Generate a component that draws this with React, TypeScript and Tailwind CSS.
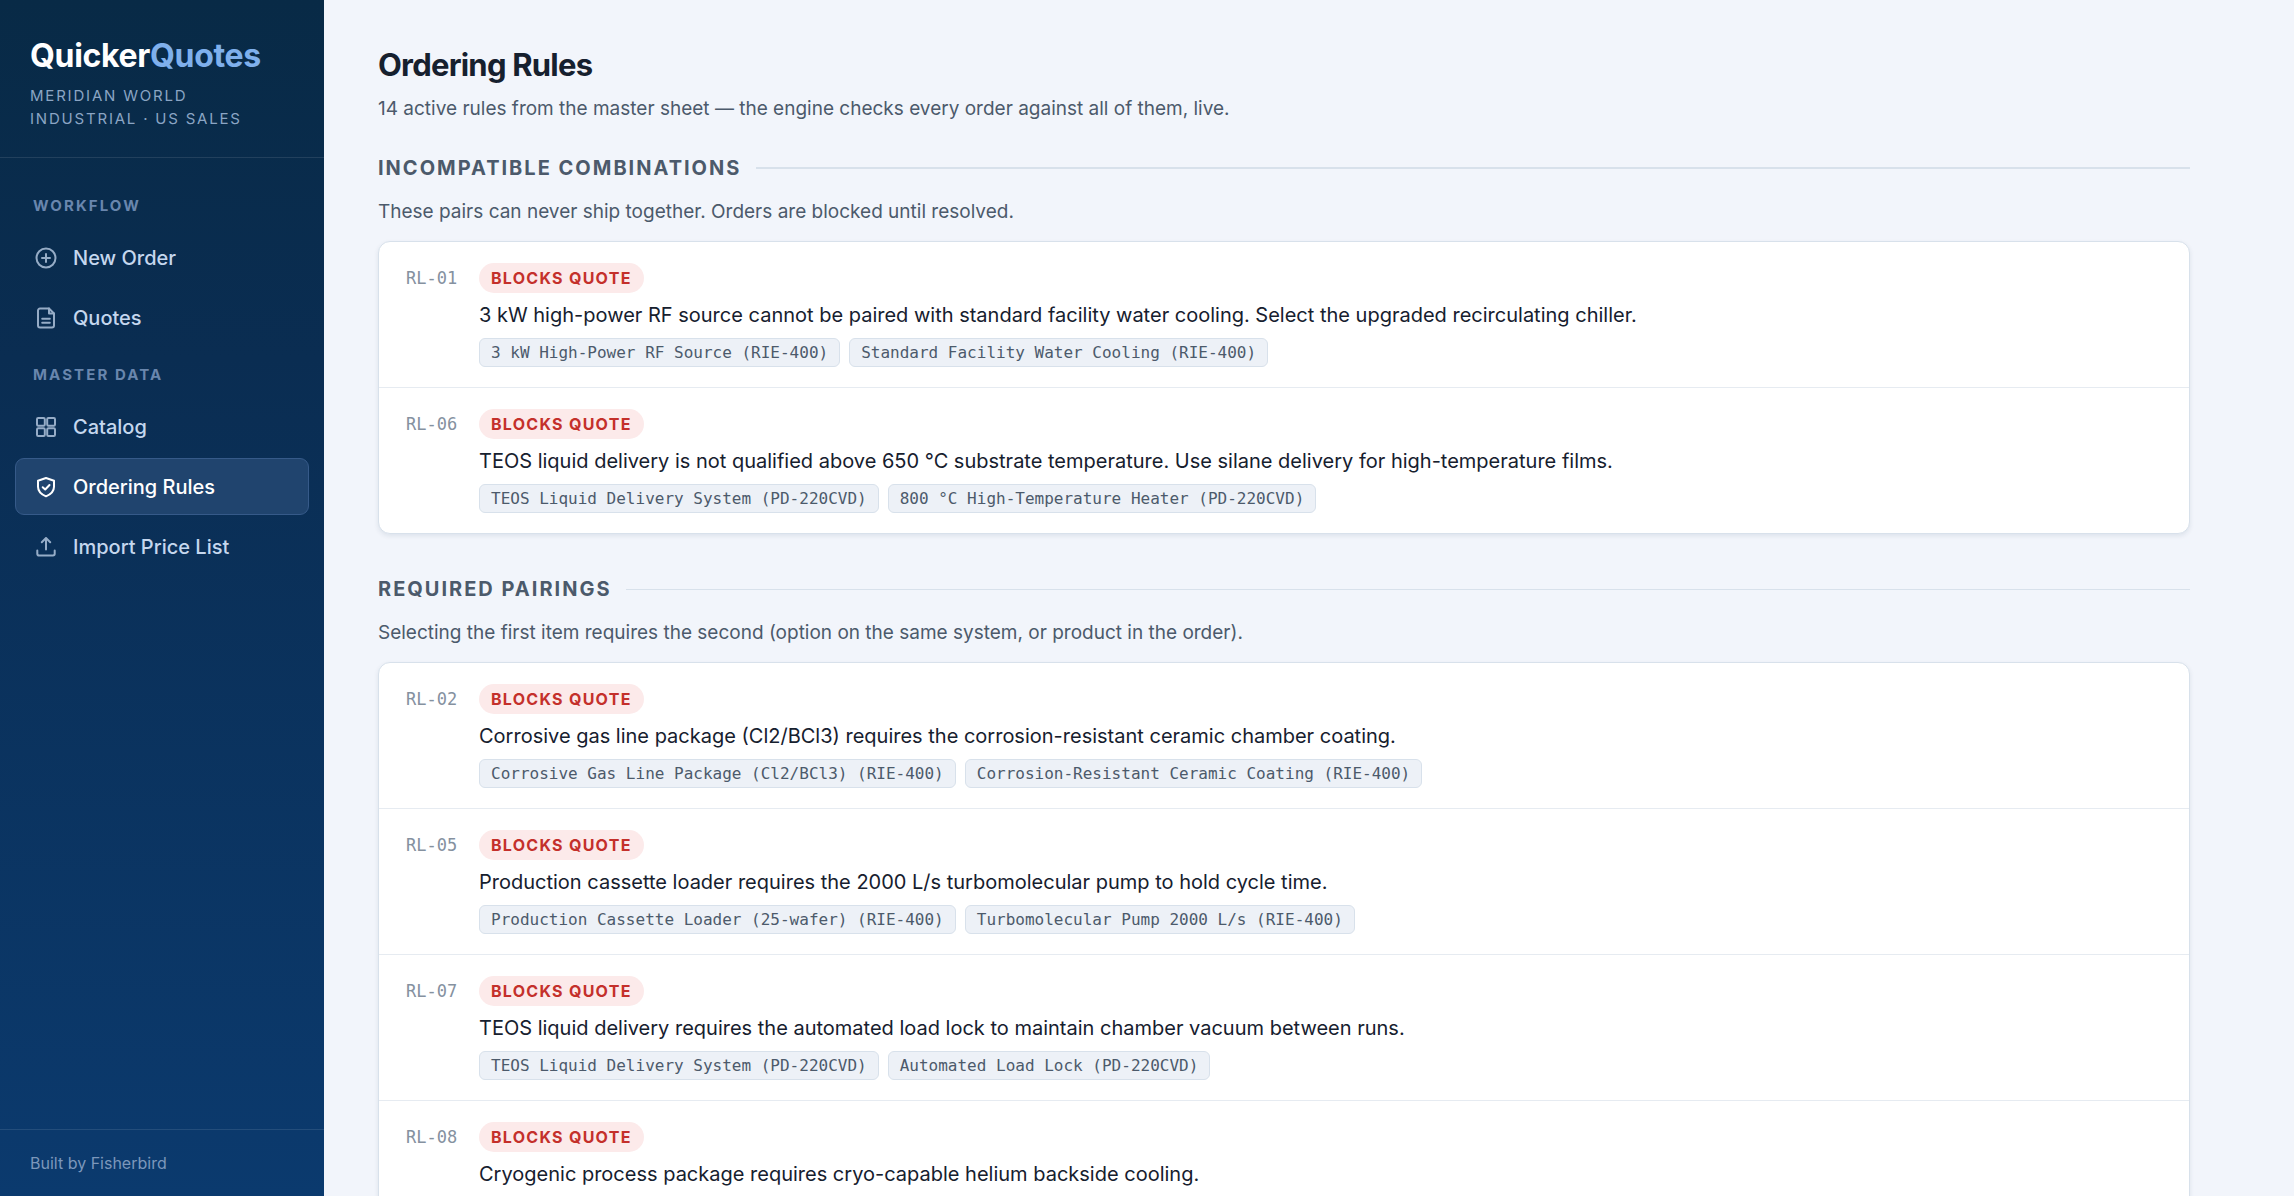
import React from 'react';

interface Rule {
  id: string;
  text: string;
  items: string[];
}

interface RuleGroup {
  title: string;
  description: string;
  rules: Rule[];
}

interface NavItem {
  label: string;
  icon: React.ReactNode;
  active?: boolean;
}

const navGroups: { title: string; items: NavItem[] }[] = [
  {
    title: 'Workflow',
    items: [
      {
        label: 'New Order',
        icon: (
          <>
            <circle cx="12" cy="12" r="9.5" />
            <path d="M12 8v8M8 12h8" />
          </>
        ),
      },
      {
        label: 'Quotes',
        icon: (
          <>
            <path d="M15 2.500H6a2 2 0 0 0-2 2v15a2 2 0 0 0 2 2h12a2 2 0 0 0 2-2V7.500z" />
            <path d="M15 2.500v5h5M8.200 12.800h7.600M8.200 16.800h7.600" />
          </>
        ),
      },
    ],
  },
  {
    title: 'Master Data',
    items: [
      {
        label: 'Catalog',
        icon: (
          <>
            <rect x="3" y="3" width="7.8" height="7.8" rx="1.2" />
            <rect x="13.2" y="3" width="7.8" height="7.8" rx="1.2" />
            <rect x="3" y="13.2" width="7.8" height="7.8" rx="1.2" />
            <rect x="13.2" y="13.2" width="7.8" height="7.8" rx="1.2" />
          </>
        ),
      },
      {
        label: 'Ordering Rules',
        active: true,
        icon: (
          <>
            <path d="M12 3l8 2.700v6c0 4.700-3.200 7.600-8 9.600-4.800-2-8-4.900-8-9.600v-6z" />
            <path d="M8.700 12.200l2.500 2.300 4.300-4.500" />
          </>
        ),
      },
      {
        label: 'Import Price List',
        icon: (
          <>
            <path d="M12 14.500V3.200M7.800 7.200L12 3l4.200 4.200" />
            <path d="M3.300 15.500v3.200a1.800 1.800 0 0 0 1.800 1.800h13.800a1.800 1.800 0 0 0 1.800-1.800v-3.200" />
          </>
        ),
      },
    ],
  },
];

const ruleGroups: RuleGroup[] = [
  {
    title: 'Incompatible Combinations',
    description: 'These pairs can never ship together. Orders are blocked until resolved.',
    rules: [
      {
        id: 'RL-01',
        text: '3 kW high-power RF source cannot be paired with standard facility water cooling. Select the upgraded recirculating chiller.',
        items: ['3 kW High-Power RF Source (RIE-400)', 'Standard Facility Water Cooling (RIE-400)'],
      },
      {
        id: 'RL-06',
        text: 'TEOS liquid delivery is not qualified above 650 °C substrate temperature. Use silane delivery for high-temperature films.',
        items: ['TEOS Liquid Delivery System (PD-220CVD)', '800 °C High-Temperature Heater (PD-220CVD)'],
      },
    ],
  },
  {
    title: 'Required Pairings',
    description: 'Selecting the first item requires the second (option on the same system, or product in the order).',
    rules: [
      {
        id: 'RL-02',
        text: 'Corrosive gas line package (Cl2/BCl3) requires the corrosion-resistant ceramic chamber coating.',
        items: ['Corrosive Gas Line Package (Cl2/BCl3) (RIE-400)', 'Corrosion-Resistant Ceramic Coating (RIE-400)'],
      },
      {
        id: 'RL-05',
        text: 'Production cassette loader requires the 2000 L/s turbomolecular pump to hold cycle time.',
        items: ['Production Cassette Loader (25-wafer) (RIE-400)', 'Turbomolecular Pump 2000 L/s (RIE-400)'],
      },
      {
        id: 'RL-07',
        text: 'TEOS liquid delivery requires the automated load lock to maintain chamber vacuum between runs.',
        items: ['TEOS Liquid Delivery System (PD-220CVD)', 'Automated Load Lock (PD-220CVD)'],
      },
      {
        id: 'RL-08',
        text: 'Cryogenic process package requires cryo-capable helium backside cooling.',
        items: [],
      },
    ],
  },
];

const Sidebar: React.FC = () => (
  <aside className="flex w-[324px] shrink-0 flex-col bg-linear-to-b from-[#082a46] via-[#0a2d52] via-30% to-[#0b3a6e]">
    <div className="border-b border-white/10 px-[30px] pt-9 pb-[27px]">
      <div className="text-[32px] leading-10 font-bold tracking-[-0.01em] text-white">
        Quicker<span className="text-[#7fb0ec]">Quotes</span>
      </div>
      <div className="mt-2 pr-[30px] text-[15px] leading-[23px] tracking-[0.12em] text-[#8ba5c4] uppercase">
        Meridian World Industrial · US Sales
      </div>
    </div>

    <nav className="flex-1 px-[15px] pt-6">
      {navGroups.map((group) => (
        <div key={group.title} className="mb-[5px]">
          <h2 className="px-[18px] pt-3 pb-[11px] text-[15px] leading-6 font-bold tracking-[0.14em] text-[#6986ad] uppercase">
            {group.title}
          </h2>
          <ul className="flex flex-col gap-[3px]">
            {group.items.map((item) => (
              <li key={item.label}>
                <a
                  href="#"
                  aria-current={item.active ? 'page' : undefined}
                  className={
                    item.active
                      ? 'flex h-[57px] items-center gap-[15px] rounded-[9px] border border-[#365a89] bg-[#20446e] px-[18px] text-xl font-medium text-white'
                      : 'flex h-[57px] items-center gap-[15px] rounded-[9px] border border-transparent px-[18px] text-xl font-medium text-[#c5d7ee]'
                  }
                >
                  <svg
                    viewBox="0 0 24 24"
                    fill="none"
                    stroke="currentColor"
                    strokeWidth="2"
                    strokeLinecap="round"
                    strokeLinejoin="round"
                    className={item.active ? 'size-6' : 'size-6 opacity-75'}
                  >
                    {item.icon}
                  </svg>
                  {item.label}
                </a>
              </li>
            ))}
          </ul>
        </div>
      ))}
    </nav>

    <div className="border-t border-white/10 px-[30px] py-[21px] text-base leading-6 text-[#7c97bb]">
      Built by Fisherbird
    </div>
  </aside>
);

const RuleRow: React.FC<{ rule: Rule }> = ({ rule }) => (
  <li className="flex gap-[21px] border-b border-[#e6ebf1] px-[27px] pt-[21px] pb-5 last:border-b-0">
    <span className="w-[52px] shrink-0 font-['DejaVu_Sans_Mono',monospace] text-[17px] leading-[30px] text-[#85919f]">
      {rule.id}
    </span>
    <div className="min-w-0">
      <span className="block w-fit rounded-full bg-[#fceaea] px-3 text-base leading-[30px] font-bold tracking-[0.08em] text-[#c4302b] uppercase">
        Blocks quote
      </span>
      <p className="mt-[7px] text-xl leading-[30px] text-[#16202e]">{rule.text}</p>
      <div className="mt-2 flex flex-wrap gap-[9px]">
        {rule.items.map((item) => (
          <span
            key={item}
            className="rounded-md border border-[#d8e1eb] bg-[#edf1f7] px-[11px] font-['DejaVu_Sans_Mono',monospace] text-base leading-[27px] text-[#4c5a6b]"
          >
            {item}
          </span>
        ))}
      </div>
    </div>
  </li>
);

export default function App() {
  return (
    <div className="flex h-screen overflow-hidden bg-[#f2f5fb] font-['Inter',sans-serif]">
      <Sidebar />
      <main className="min-w-0 flex-1 overflow-y-auto [scrollbar-width:none]">
        <div className="max-w-[1920px] px-[54px] pt-[45px]">
          <h1 className="text-[31px] leading-10 font-bold tracking-tight text-[#16202e]">Ordering Rules</h1>
          <p className="mt-[10px] text-[19px] leading-7 text-[#4c5a6b]">
            14 active rules from the master sheet — the engine checks every order against all of them, live.
          </p>

          {ruleGroups.map((group) => (
            <section key={group.title} className="group mt-[43px] first-of-type:mt-[33px]">
              <div className="flex items-center gap-[15px]">
                <h2 className="text-xl leading-6 font-bold tracking-widest text-[#4c5a6b] uppercase">
                  {group.title}
                </h2>
                <div className="h-px flex-1 bg-[#d8e1eb] group-first-of-type:h-0.5" />
              </div>
              <p className="mt-[18px] text-[19px] leading-7 text-[#4c5a6b]">{group.description}</p>
              <ul className="mt-[15px] overflow-hidden rounded-xl border border-[#d8e1eb] bg-white shadow-[0_2px_5px_rgba(16,42,80,0.09)]">
                {group.rules.map((rule) => (
                  <RuleRow key={rule.id} rule={rule} />
                ))}
              </ul>
            </section>
          ))}
        </div>
      </main>
    </div>
  );
}
